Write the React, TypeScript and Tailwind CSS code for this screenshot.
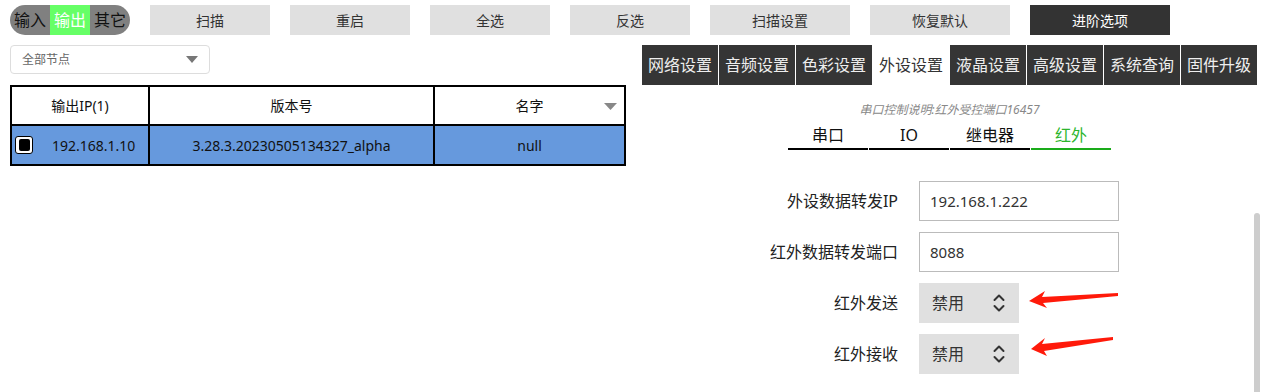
import React from "react";

const toolButtons = [
  { label: "扫描", w: "w-[120px]" },
  { label: "重启", w: "w-[120px]" },
  { label: "全选", w: "w-[120px]" },
  { label: "反选", w: "w-[120px]" },
  { label: "扫描设置", w: "w-[140px]" },
  { label: "恢复默认", w: "w-[140px]" },
];

const tabs = ["网络设置", "音频设置", "色彩设置", "外设设置", "液晶设置", "高级设置", "系统查询", "固件升级"];
const subTabs = ["串口", "IO", "继电器", "红外"];

const UpDown = () => (
  <svg width="12" height="20" viewBox="0 0 12 20" fill="none" stroke="#333" strokeWidth="2" strokeLinecap="round" strokeLinejoin="round">
    <polyline points="1.5,7 6,2.5 10.5,7" />
    <polyline points="1.5,13 6,17.5 10.5,13" />
  </svg>
);

const Field = ({ label, children }: { label: string; children: React.ReactNode }) => (
  <div className="flex h-[40px] items-center">
    <div className="w-[256px] text-right text-[16px] text-[#222]">{label}</div>
    <div className="ml-[21px]">{children}</div>
  </div>
);

const SelectBox = ({ value }: { value: string }) => (
  <div className="flex h-[40px] w-[100px] items-center justify-between bg-[#e0e0e0] pl-[13px] pr-[14px] text-[16px] text-[#333]">
    <span>{value}</span>
    <UpDown />
  </div>
);

export default function App() {
  return (
    <div className="relative h-[392px] w-[1265px] overflow-hidden bg-white font-['Noto_Sans','Noto_Sans_CJK_SC',sans-serif] text-[#333]">
      {/* toolbar */}
      <div className="flex items-center pl-[10px] pt-[5px]">
        <div className="flex h-[30px] w-[120px] overflow-hidden rounded-full bg-[#808080] text-[16px] leading-[30px]">
          <span className="w-[40px] text-center text-[#111]">输入</span>
          <span className="w-[40px] bg-[#66ff66] text-center text-white">输出</span>
          <span className="w-[40px] text-center text-[#111]">其它</span>
        </div>
        <div className="ml-[20px] flex gap-[20px]">
          {toolButtons.map((b) => (
            <div key={b.label} className={`${b.w} flex h-[30px] items-center justify-center bg-[#e0e0e0] text-[14px] text-[#333]`}>
              {b.label}
            </div>
          ))}
          <div className="flex h-[30px] w-[140px] items-center justify-center bg-[#333333] text-[14px] text-white">进阶选项</div>
        </div>
      </div>

      <div className="mt-[10px] flex">
        {/* left */}
        <div className="ml-[10px] w-[616px]">
          <div className="flex h-[29px] w-[200px] items-center justify-between rounded-[4px] border border-[#dddddd] pl-[11px] pr-[11px] text-[12px] text-[#666]">
            <span>全部节点</span>
            <svg width="12" height="7" viewBox="0 0 12 7">
              <polygon points="0,0 12,0 6,7" fill="#777" />
            </svg>
          </div>

          <div className="mt-[11px] border-2 border-black text-[14px] text-[#111]">
            <div className="grid h-[39px] grid-cols-[138px_285px_1fr] border-b-2 border-black bg-white">
              <div className="flex items-center justify-center border-r-2 border-black">输出IP(1)</div>
              <div className="flex items-center justify-center border-r-2 border-black">版本号</div>
              <div className="relative flex items-center justify-center">
                名字
                <svg className="absolute right-[7px] top-[16px]" width="13" height="7" viewBox="0 0 13 7">
                  <polygon points="0,0 13,0 6.5,7" fill="#888" />
                </svg>
              </div>
            </div>
            <div className="grid h-[38px] grid-cols-[138px_285px_1fr] bg-[#6699dd]">
              <div className="flex items-center border-r-2 border-black">
                <div className="ml-[3px] flex h-[18px] w-[18px] items-center justify-center rounded-[3px] border border-black bg-white">
                  <div className="h-[12px] w-[11px] rounded-[2px] bg-black" />
                </div>
                <span className="ml-[19px]">192.168.1.10</span>
              </div>
              <div className="flex items-center justify-center border-r-2 border-black">3.28.3.20230505134327_alpha</div>
              <div className="flex items-center justify-center">null</div>
            </div>
          </div>
        </div>

        {/* right */}
        <div className="ml-[16px] w-[615px]">
          <div className="flex h-[40px] gap-px">
            {tabs.map((t) => (
              <div
                key={t}
                className={
                  t === "外设设置"
                    ? "flex w-[76px] items-center justify-center bg-white text-[16px] text-[#333]"
                    : "flex w-[76px] items-center justify-center bg-[#353535] text-[16px] text-[#eeeeee]"
                }
              >
                {t}
              </div>
            ))}
          </div>

          <div className="mt-[17px] text-center text-[12px] leading-[16px] italic text-[#888]">串口控制说明:红外受控端口16457</div>

          <div className="mt-[4px] flex justify-center gap-px">
            {subTabs.map((s) => (
              <div
                key={s}
                className={
                  s === "红外"
                    ? "h-[28px] w-[80px] border-b-2 border-[#1aab1a] text-center text-[16px] leading-[26px] text-[#2db52d]"
                    : "h-[28px] w-[80px] border-b-2 border-black text-center text-[16px] leading-[26px] text-[#111]"
                }
              >
                {s}
              </div>
            ))}
          </div>

          <div className="mt-[31px] flex flex-col gap-[11px]">
            <Field label="外设数据转发IP">
              <input
                readOnly
                value="192.168.1.222"
                className="h-[40px] w-[200px] border border-[#bbbbbb] bg-white pl-[10px] text-[15px] text-[#333] outline-none"
              />
            </Field>
            <Field label="红外数据转发端口">
              <input
                readOnly
                value="8088"
                className="h-[40px] w-[200px] border border-[#bbbbbb] bg-white pl-[10px] text-[15px] text-[#333] outline-none"
              />
            </Field>
            <Field label="红外发送">
              <SelectBox value="禁用" />
            </Field>
            <Field label="红外接收">
              <SelectBox value="禁用" />
            </Field>
          </div>
        </div>
      </div>

      {/* scrollbar thumb */}
      <div className="absolute left-[1254px] top-[213px] h-[190px] w-[6px] rounded-t-full bg-[#cdcdcd]" />

      {/* red annotation arrows */}
      <svg className="absolute left-0 top-0" width="1265" height="392" viewBox="0 0 1265 392" style={{ pointerEvents: "none" }}>
        <polygon points="1029,301 1045,291 1042,297 1118,293 1118,296 1043,303 1047,308" fill="#ff1a0a" />
        <polygon points="1031,349 1045,338 1042,344 1113,337 1113,340 1044,351 1047,356" fill="#ff1a0a" />
      </svg>
    </div>
  );
}
